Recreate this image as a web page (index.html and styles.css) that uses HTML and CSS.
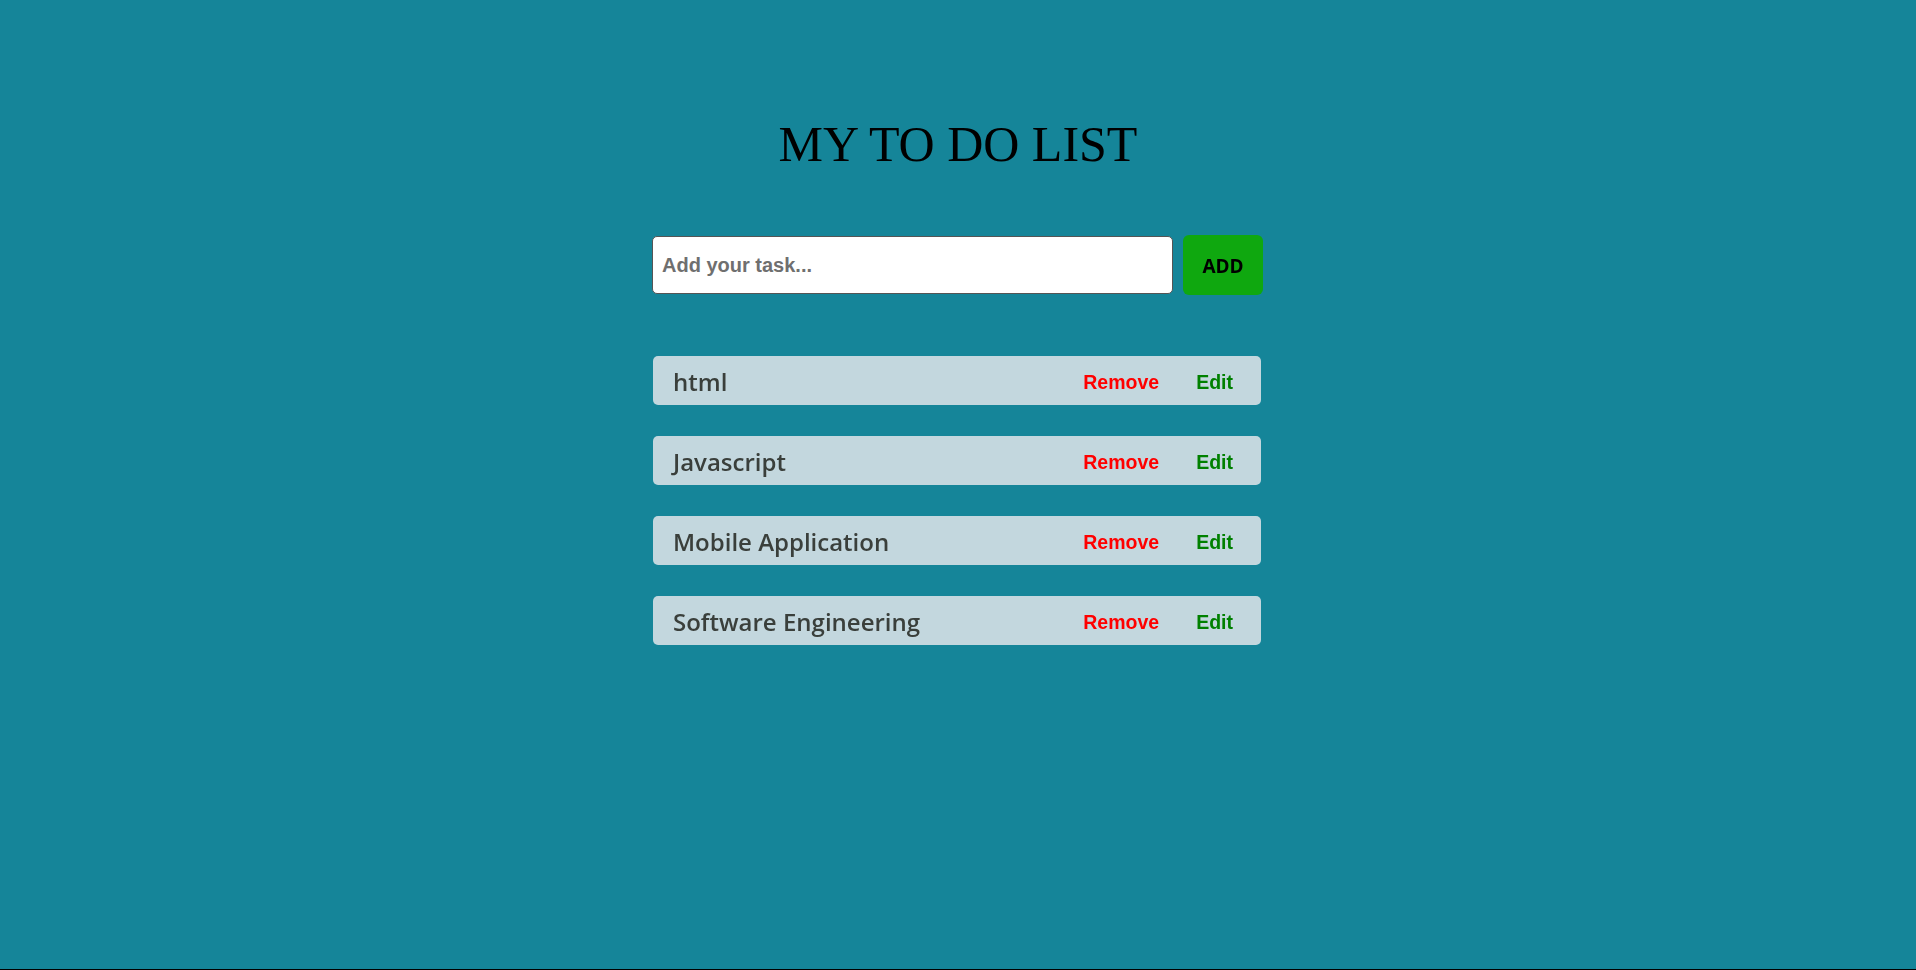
FILE: index.html
```html
<!DOCTYPE html>
<html lang="en">
<head>
<meta charset="utf-8">
<title>My To Do List</title>
<link rel="stylesheet" href="styles.css">
</head>
<body>
<div class="page">
  <h1 class="title">MY TO DO LIST</h1>
  <div class="entry">
    <input class="task-input" type="text" placeholder="Add your task..." autofocus>
    <button class="add-btn">ADD</button>
  </div>
  <ul class="list">
    <li class="item"><span class="name">html</span><button class="remove">Remove</button><button class="edit">Edit</button></li>
    <li class="item"><span class="name">Javascript</span><button class="remove">Remove</button><button class="edit">Edit</button></li>
    <li class="item"><span class="name">Mobile Application</span><button class="remove">Remove</button><button class="edit">Edit</button></li>
    <li class="item"><span class="name">Software Engineering</span><button class="remove">Remove</button><button class="edit">Edit</button></li>
  </ul>
</div>
</body>
</html>
```
FILE: styles.css
```css
html, body {
  margin: 0;
  padding: 0;
}
body {
  background: #158599;
  font-family: "Liberation Sans", Arial, sans-serif;
}
.page {
  box-sizing: border-box;
  min-height: 970px;
  border-bottom: 1px solid #000;
  display: flex;
  flex-direction: column;
  align-items: center;
  padding-top: 117px;
}
.title {
  margin: 0;
  font-family: "Liberation Serif", "Times New Roman", serif;
  font-weight: normal;
  font-size: 50px;
  line-height: 54px;
  color: #000;
}
.entry {
  display: flex;
  gap: 10px;
  margin: 65px 1px 0 0;
  width: 611px;
}
.task-input {
  box-sizing: border-box;
  width: 521px;
  height: 58px;
  border: 1px solid #555;
  border-radius: 5px;
  padding: 0 9px;
  font-family: "Liberation Sans", Arial, sans-serif;
  font-weight: bold;
  font-size: 20px;
  color: #333;
  background: #fff;
  outline: none;
  caret-color: #000;
}
.task-input::placeholder {
  color: #6f6f6f;
}
.add-btn {
  width: 80px;
  height: 60px;
  margin-top: -1px;
  border: none;
  border-radius: 6px;
  background: #0fa80f;
  color: #000;
  font-family: "Comic Sans MS", "Open Sans", sans-serif;
  font-weight: bold;
  font-size: 19px;
  padding: 2px 0 0;
}
.list {
  list-style: none;
  margin: 61px 2px 0 0;
  padding: 0;
  width: 608px;
  display: flex;
  flex-direction: column;
  gap: 31px;
}
.item {
  box-sizing: border-box;
  height: 49px;
  display: flex;
  align-items: center;
  background: #c3d7de;
  border-radius: 5px;
  padding: 0 28px 0 20px;
}
.name {
  flex: 1;
  font-family: "Comic Sans MS", "Open Sans", sans-serif;
  font-size: 24px;
  font-weight: 600;
  color: #3a3f3b;
  padding-top: 1px;
}
.remove, .edit {
  border: none;
  background: none;
  padding: 4px 0 0;
  font-family: "Liberation Sans", Arial, sans-serif;
  font-weight: bold;
  font-size: 19.5px;
}
.remove {
  color: #ff0000;
  margin-right: 37px;
}
.edit {
  color: #008000;
}
```
